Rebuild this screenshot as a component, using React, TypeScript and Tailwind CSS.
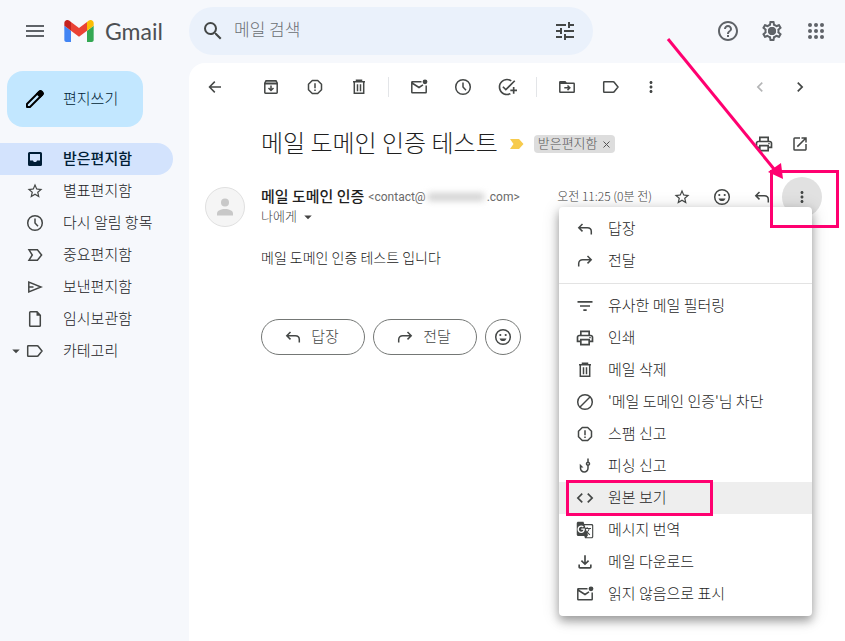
import type { ReactNode } from "react";
import {
  MdMenu,
  MdSearch,
  MdTune,
  MdHelpOutline,
  MdOutlinePrint,
  MdOpenInNew,
  MdOutlineAddTask,
  MdMoreVert,
  MdChevronLeft,
  MdChevronRight,
  MdStarBorder,
  MdFilterList,
  MdPhishing,
  MdCode,
  MdGTranslate,
  MdOutlineFileDownload,
  MdArrowDropDown,
  MdOutlineSettings,
} from "react-icons/md";

function Glyph({ children, size = 20 }: { children: ReactNode; size?: number }) {
  return (
    <svg
      width={size}
      height={size}
      viewBox="0 0 20 20"
      fill="none"
      stroke="currentColor"
      strokeWidth="1.5"
      aria-hidden="true"
      className="shrink-0"
    >
      {children}
    </svg>
  );
}

const Clock = () => (
  <Glyph>
    <circle cx="10" cy="10" r="7.3" />
    <path d="M10 5.5V10l3 3.2" />
  </Glyph>
);

const Label = () => (
  <Glyph>
    <path d="M3.2 4.8h8.9c.6 0 1 .2 1.3.7L17 10l-3.600 4.500c-.3.500-.7.700-1.300.700H3.200c-.3 0-.5-.2-.5-.5V5.300c0-.3.2-.5.5-.5Z" />
  </Glyph>
);

const Important = () => (
  <Glyph>
    <path d="M4 4.800h8.400L16.600 10l-4.200 5.200H4L7.300 10 4 4.800Z" />
  </Glyph>
);

const Inbox = () => (
  <Glyph>
    <path
      stroke="none"
      fill="currentColor"
      fillRule="evenodd"
      d="M4.500 3h11A1.500 1.500 0 0 1 17 4.500v11a1.500 1.500 0 0 1-1.500 1.500h-11A1.500 1.500 0 0 1 3 15.500v-11A1.500 1.500 0 0 1 4.500 3ZM5 5v6.500h3c.3 1 1 1.500 2 1.500s1.700-.5 2-1.500h3V5H5Z"
    />
  </Glyph>
);

const Send = () => (
  <Glyph>
    <path d="M3.800 5v10L16 10 3.800 5ZM4 10h4.500" />
  </Glyph>
);

const Draft = () => (
  <Glyph>
    <path d="M12 2.800H5.500c-.5 0-.8.300-.8.800v12.800c0 .5.300.8.800.8h9c.5 0 .8-.3.800-.8V6.300L12 2.800Z" />
    <path d="M11.500 2.500v4.300h4.300Z" fill="currentColor" stroke="none" />
  </Glyph>
);

const Archive = () => (
  <Glyph>
    <path d="M3.800 6 5 3.800h10L16.200 6v9.500c0 .5-.2.700-.7.700h-11c-.5 0-.7-.2-.7-.7V6Z" />
    <path d="M4 4h12v2.800H4Z" fill="currentColor" fillOpacity=".5" stroke="none" />
    <path d="M3.500 6.700h13M10 8.500v4.500M7.500 11l2.500 2.500 2.500-2.500" />
  </Glyph>
);

const Report = () => (
  <Glyph>
    <path d="M7.300 3.500h5.400l3.800 3.800v5.400l-3.800 3.800H7.300l-3.800-3.800V7.300l3.800-3.800Z" strokeLinejoin="round" />
    <path d="M10 6.300v5M10 12.500V14" />
  </Glyph>
);

const Trash = () => (
  <Glyph>
    <path d="M4 4.700h12M7.500 4V3.300h5V4M5.300 5v11.200h9.400V5" />
    <path d="M8.500 7.200v7M11.500 7.200v7" />
  </Glyph>
);

const Unread = () => (
  <Glyph>
    <path d="M12.500 4.800H3.300c-.3 0-.5.200-.5.500v9.900c0 .3.200.5.500.5h13.400c.3 0 .5-.2.500-.5V8.500M3 6l7 4.500 4-2.600" />
    <circle cx="16" cy="4.800" r="2.400" fill="currentColor" stroke="none" />
  </Glyph>
);

const Move = () => (
  <Glyph>
    <path d="M2.800 5v9.700c0 .3.200.5.500.5h13.400c.3 0 .5-.2.500-.5V6.800c0-.3-.2-.5-.5-.5H9.500L8 4.800H3.300c-.3 0-.5 0-.5.200Z" />
    <path d="M3 4.500h5l2 2.500H3Z" fill="currentColor" stroke="none" />
    <path d="M7.300 10.800h5M10.500 8.500l2.300 2.300-2.300 2.300" />
  </Glyph>
);

const Back = () => (
  <Glyph>
    <path d="M16 10H4.800M9.800 4.600 4.500 10l5.300 5.400" />
  </Glyph>
);

const Reply = () => (
  <Glyph>
    <path d="M7.500 5 3.800 8.700l3.700 3.700M4 8.700h8.300c2.400 0 4 1.500 4 3.900V15.500" />
  </Glyph>
);

const Forward = () => (
  <Glyph>
    <path d="M12.500 5l3.700 3.700-3.700 3.700M16 8.700H7.700c-2.400 0-4 1.500-4 3.900V15.500" />
  </Glyph>
);

const Smile = () => (
  <Glyph>
    <circle cx="10" cy="10" r="7.300" />
    <circle cx="7.300" cy="8" r="1.100" fill="currentColor" stroke="none" />
    <circle cx="12.700" cy="8" r="1.100" fill="currentColor" stroke="none" />
    <path d="M6.500 11.500h7c-.6 1.700-1.800 2.600-3.500 2.600s-2.900-.9-3.500-2.600Z" fill="currentColor" stroke="none" />
  </Glyph>
);

const Block = () => (
  <Glyph>
    <circle cx="10" cy="10" r="7.300" />
    <path d="M5 15 15 5" />
  </Glyph>
);

const Pencil = () => (
  <Glyph size={24}>
    <path
      d="M3.300 16.700v-2.500L13.500 4c.5-.5 1.200-.5 1.700 0l.8.800c.5.500.5 1.200 0 1.700L5.800 16.700H3.300Z"
      strokeWidth="1.600"
      strokeLinejoin="round"
    />
    <path d="m11.800 5.700 2-2c.5-.5 1.200-.5 1.700 0l.8.800c.5.500.5 1.200 0 1.700l-2 2Z" fill="currentColor" />
  </Glyph>
);

function GmailMark() {
  return (
    <svg width="30" height="22" viewBox="52 42 88 66" aria-hidden="true">
      <path fill="#4285f4" d="M58 108h14V74L52 59v43c0 3.320 2.690 6 6 6" />
      <path fill="#34a853" d="M120 108h14c3.320 0 6-2.690 6-6V59l-20 15" />
      <path fill="#fbbc04" d="M120 48v26l20-15v-8c0-7.420-8.470-11.650-14.400-7.200" />
      <path fill="#ea4335" d="M72 74V48l24 18 24-18v26L96 92" />
      <path fill="#c5221f" d="M52 51v8l20 15V48l-5.600-4.200c-5.940-4.450-14.400-.22-14.400 7.200" />
    </svg>
  );
}

function IconButton({ label, children, className = "" }: { label: string; children: ReactNode; className?: string }) {
  return (
    <button
      type="button"
      aria-label={label}
      className={`flex h-10 shrink-0 items-center justify-center rounded-full ${className || "w-11"}`}
    >
      {children}
    </button>
  );
}

const folders = [
  { name: "받은편지함", icon: <Inbox />, active: true },
  { name: "별표편지함", icon: <MdStarBorder size={18} /> },
  { name: "다시 알림 항목", icon: <Clock /> },
  { name: "중요편지함", icon: <Important /> },
  { name: "보낸편지함", icon: <Send /> },
  { name: "임시보관함", icon: <Draft /> },
  { name: "카테고리", icon: <Label />, expandable: true },
];

const replyItems = [
  { name: "답장", icon: <Reply /> },
  { name: "전달", icon: <Forward /> },
];

const messageItems = [
  { name: "유사한 메일 필터링", icon: <MdFilterList size={20} /> },
  { name: "인쇄", icon: <MdOutlinePrint size={20} /> },
  { name: "메일 삭제", icon: <Trash /> },
  { name: "'메일 도메인 인증'님 차단", icon: <Block /> },
  { name: "스팸 신고", icon: <Report /> },
  { name: "피싱 신고", icon: <MdPhishing size={18} /> },
  { name: "원본 보기", icon: <MdCode size={20} />, marked: true },
  { name: "메시지 번역", icon: <MdGTranslate size={18} /> },
  { name: "메일 다운로드", icon: <MdOutlineFileDownload size={20} /> },
  { name: "읽지 않음으로 표시", icon: <Unread /> },
];

function MenuItem({ name, icon, marked }: { name: string; icon: ReactNode; marked?: boolean }) {
  return (
    <li role="none" className="relative">
      <button
        type="button"
        role="menuitem"
        className={`flex h-8 w-full items-center gap-[13px] pl-4 text-left text-[15px] text-[#1f1f1f] ${marked ? "bg-[#eeeeee]" : ""}`}
      >
        <span className="flex w-5 shrink-0 justify-center text-[#444746]">{icon}</span>
        <span className="pb-0.5">{name}</span>
      </button>
      {marked && (
        <span className="pointer-events-none absolute -top-0.5 left-[7px] h-9 w-[147px] border-3 border-[#ff0070]" />
      )}
    </li>
  );
}

function MoreMenu() {
  return (
    <div
      role="menu"
      className="absolute top-[30px] right-[10px] z-10 w-[253px] rounded-sm bg-white py-1.5 shadow-[0_5px_10px_rgba(0,0,0,0.32),0_2px_18px_rgba(0,0,0,0.16)]"
    >
      <ul role="none">
        {replyItems.map((item) => (
          <MenuItem key={item.name} {...item} />
        ))}
      </ul>
      <hr className="my-1.5 border-[#e3e3e3]" />
      <ul role="none">
        {messageItems.map((item) => (
          <MenuItem key={item.name} {...item} />
        ))}
      </ul>
    </div>
  );
}

function Callout() {
  return (
    <>
      <span className="pointer-events-none absolute -top-[7px] -left-3 z-20 h-[58px] w-[69px] border-3 border-[#ff0070]" />
      <svg
        width="118"
        height="142"
        viewBox="0 0 118 142"
        aria-hidden="true"
        className="pointer-events-none absolute -top-[139px] right-[38px] z-20"
      >
        <path d="M2 1 108 131" stroke="#ff0070" strokeWidth="3" />
        <path d="M117 141 102 134 115 125Z" fill="#ff0070" />
      </svg>
    </>
  );
}

function Header() {
  return (
    <header className="mb-px flex h-[62px] items-center">
      <div className="flex w-[189px] shrink-0 items-center pl-[23px]">
        <button type="button" aria-label="기본 메뉴" className="text-[#5f6368]">
          <MdMenu size={24} />
        </button>
        <a href="#inbox" className="ml-[17px] flex items-center gap-[11px]">
          <GmailMark />
          <span className="font-['Lato'] text-[23px] leading-6 font-normal text-[#4d5054]">Gmail</span>
        </a>
      </div>
      <form role="search" className="flex h-12 min-w-0 flex-1 items-center rounded-full bg-[#eaf1fb] pr-4 pl-3 text-[#444746]">
        <button type="button" aria-label="메일 검색" className="shrink-0">
          <MdSearch size={24} />
        </button>
        <input
          type="text"
          aria-label="메일 검색"
          placeholder="메일 검색"
          className="ml-[9px] min-w-0 flex-1 bg-transparent pb-1 text-[17px] outline-none placeholder:text-[#6b6f73]"
        />
        <button type="button" aria-label="검색 옵션 표시" className="shrink-0">
          <MdTune size={24} />
        </button>
      </form>
      <div className="flex w-[252px] shrink-0 justify-end pr-[7px] text-[#5f6368]">
        <IconButton label="지원">
          <MdHelpOutline size={24} />
        </IconButton>
        <IconButton label="설정">
          <span className="relative block">
            <MdOutlineSettings size={24} />
            <span className="absolute top-2 left-2 size-2 rounded-full bg-[#5f6368]" />
          </span>
        </IconButton>
        <IconButton label="Google 앱">
          <svg width="24" height="24" viewBox="0 0 24 24" fill="currentColor" aria-hidden="true">
            {[6, 12, 18].map((y) => [6, 12, 18].map((x) => <circle key={`${x}-${y}`} cx={x} cy={y} r="2" />))}
          </svg>
        </IconButton>
      </div>
    </header>
  );
}

function Sidebar() {
  return (
    <aside className="w-[189px] shrink-0 pt-2">
      <button
        type="button"
        className="ml-[7px] flex h-14 w-[136px] items-center gap-4 rounded-2xl bg-[#c2e7ff] pl-4 text-[15px] text-[#001d35]"
      >
        <span className="text-black">
          <Pencil />
        </span>
        <span className="pb-0.5">편지쓰기</span>
      </button>
      <nav className="mt-4 mr-4">
        {folders.map((f) => (
          <a
            key={f.name}
            href="#folder"
            className={`flex h-8 items-center rounded-r-full text-[15px] ${
              f.active ? "bg-[#d3e3fd] font-medium text-[#001d35]" : "text-[#202124]"
            }`}
          >
            <span className="flex w-[25px] shrink-0 justify-end text-[#444746]">
              {f.expandable && <MdArrowDropDown size={18} />}
            </span>
            <span className={`mr-[18px] flex w-5 shrink-0 justify-center ${f.active ? "" : "text-[#444746]"}`}>
              {f.icon}
            </span>
            <span className="pb-0.5">{f.name}</span>
          </a>
        ))}
      </nav>
    </aside>
  );
}

function Toolbar() {
  return (
    <div className="flex h-12 items-center pr-[25px] pl-1 text-[#444746]">
      <IconButton label="받은편지함으로 돌아가기">
        <Back />
      </IconButton>
      <div className="ml-3 flex">
        <IconButton label="보관처리">
          <Archive />
        </IconButton>
        <IconButton label="스팸 신고">
          <Report />
        </IconButton>
        <IconButton label="삭제">
          <Trash />
        </IconButton>
      </div>
      <span className="mr-2 ml-[7px] h-5 w-px bg-[#e3e5e8]" />
      <div className="flex">
        <IconButton label="읽지 않음으로 표시">
          <Unread />
        </IconButton>
        <IconButton label="다시 알림">
          <Clock />
        </IconButton>
        <IconButton label="Tasks에 추가">
          <MdOutlineAddTask size={20} />
        </IconButton>
      </div>
      <span className="mr-2 ml-[7px] h-5 w-px bg-[#e3e5e8]" />
      <div className="flex">
        <IconButton label="이동">
          <Move />
        </IconButton>
        <IconButton label="라벨">
          <Label />
        </IconButton>
        <IconButton label="더보기" className="w-9">
          <MdMoreVert size={18} />
        </IconButton>
      </div>
      <div className="ml-auto flex">
        <IconButton label="이전" className="w-10 text-[#b4b5b6]">
          <MdChevronLeft size={20} />
        </IconButton>
        <IconButton label="다음" className="w-10">
          <MdChevronRight size={20} />
        </IconButton>
      </div>
    </div>
  );
}

function Message() {
  return (
    <article className="pr-[23px] pl-4">
      <div className="flex h-[66px] items-center pl-14">
        <h1 className="pb-1 text-2xl leading-8 whitespace-nowrap text-[#1f1f1f]">메일 도메인 인증 테스트</h1>
        <svg width="14" height="10" viewBox="0 0 14 10" aria-hidden="true" className="ml-3 shrink-0">
          <path d="M0 0h9l4.500 5L9 10H0l3.500-5Z" fill="#f7cb4d" />
        </svg>
        <span className="ml-[10px] flex h-[18px] shrink-0 items-center gap-1 rounded-sm bg-[#dddddd] px-1 text-[13px] leading-4 text-[#555555]">
          <span className="pb-0.5">받은편지함</span>
          <button type="button" aria-label="라벨 삭제" className="flex h-4 w-[9px] items-center justify-center">
            <svg width="7" height="7" viewBox="0 0 7 7" stroke="currentColor" strokeWidth="1" aria-hidden="true">
              <path d="M.5.5l6 6M6.500.5l-6 6" />
            </svg>
          </button>
        </span>
        <div className="mr-1 ml-auto flex text-[#444746]">
          <IconButton label="모두 인쇄" className="w-9">
            <MdOutlinePrint size={20} />
          </IconButton>
          <IconButton label="새 창에서 열기" className="w-9">
            <MdOpenInNew size={18} />
          </IconButton>
        </div>
      </div>

      <div className="flex items-start">
        <span className="mt-[10px] flex size-10 shrink-0 items-center justify-center rounded-full border border-[#e0e0e0] bg-[#f5f5f5]">
          <svg width="16" height="18" viewBox="0 0 16 18" fill="#c8c8c8" aria-hidden="true">
            <circle cx="8" cy="4.500" r="4" />
            <path d="M0 17.500v-2c0-3 4-4.500 8-4.500s8 1.500 8 4.500v2Z" />
          </svg>
        </span>
        <div className="ml-4 min-w-0 flex-1">
          <div className="flex h-10 items-center">
            <p className="flex items-center whitespace-nowrap">
              <span className="pb-0.5 text-[15px] font-medium text-[#1f1f1f]">메일 도메인 인증</span>
              <span className="ml-1 flex items-center font-['Roboto'] text-xs font-normal text-[#6a6a6a]">
                &lt;contact@
                <span className="flex h-3 w-[61px] items-center justify-center blur-[3px]">
                  <span className="h-2 w-14 bg-[#d2d2d2]" />
                </span>
                .com&gt;
              </span>
            </p>
            <time className="ml-auto pr-[10px] pb-0.5 text-xs whitespace-nowrap text-[#444444]">오전 11:25 (0분 전)</time>
            <div className="flex text-[#444746]">
              <IconButton label="별표" className="w-10">
                <MdStarBorder size={18} />
              </IconButton>
              <IconButton label="반응 추가" className="w-10">
                <Smile />
              </IconButton>
              <IconButton label="답장" className="w-10">
                <Reply />
              </IconButton>
              <div className="relative">
                <IconButton label="더보기" className="w-10 bg-[#e1e1e1]">
                  <MdMoreVert size={18} />
                </IconButton>
                <MoreMenu />
                <Callout />
              </div>
            </div>
          </div>
          <button type="button" className="-mt-2 flex h-4 items-center gap-0.5 text-[13px] text-[#444444]">
            <span className="pb-0.5">나에게</span>
            <MdArrowDropDown size={18} />
          </button>
        </div>
      </div>

      <div className="pl-14">
        <p className="mt-[18px] text-sm leading-6 text-[#222222]">메일 도메인 인증 테스트 입니다</p>
        <div className="mt-[50px] flex gap-2 text-[15px] text-[#444746]">
          <button
            type="button"
            className="flex h-9 w-[104px] items-center justify-center gap-2 rounded-full border border-[#747775] pr-1"
          >
            <Reply />
            <span className="pb-0.5">답장</span>
          </button>
          <button
            type="button"
            className="flex h-9 w-[104px] items-center justify-center gap-2 rounded-full border border-[#747775] pr-1"
          >
            <Forward />
            <span className="pb-0.5">전달</span>
          </button>
          <button
            type="button"
            aria-label="반응 추가"
            className="flex size-9 items-center justify-center rounded-full border border-[#747775]"
          >
            <Smile />
          </button>
        </div>
      </div>
    </article>
  );
}

export default function App() {
  return (
    <div className="flex min-h-screen flex-col overflow-x-hidden bg-[#f6f8fc] font-['Noto_Sans_CJK_KR',sans-serif] font-light">
      <Header />
      <div className="flex flex-1">
        <Sidebar />
        <main className="min-w-0 flex-1 rounded-tl-2xl bg-white">
          <Toolbar />
          <Message />
        </main>
      </div>
    </div>
  );
}
